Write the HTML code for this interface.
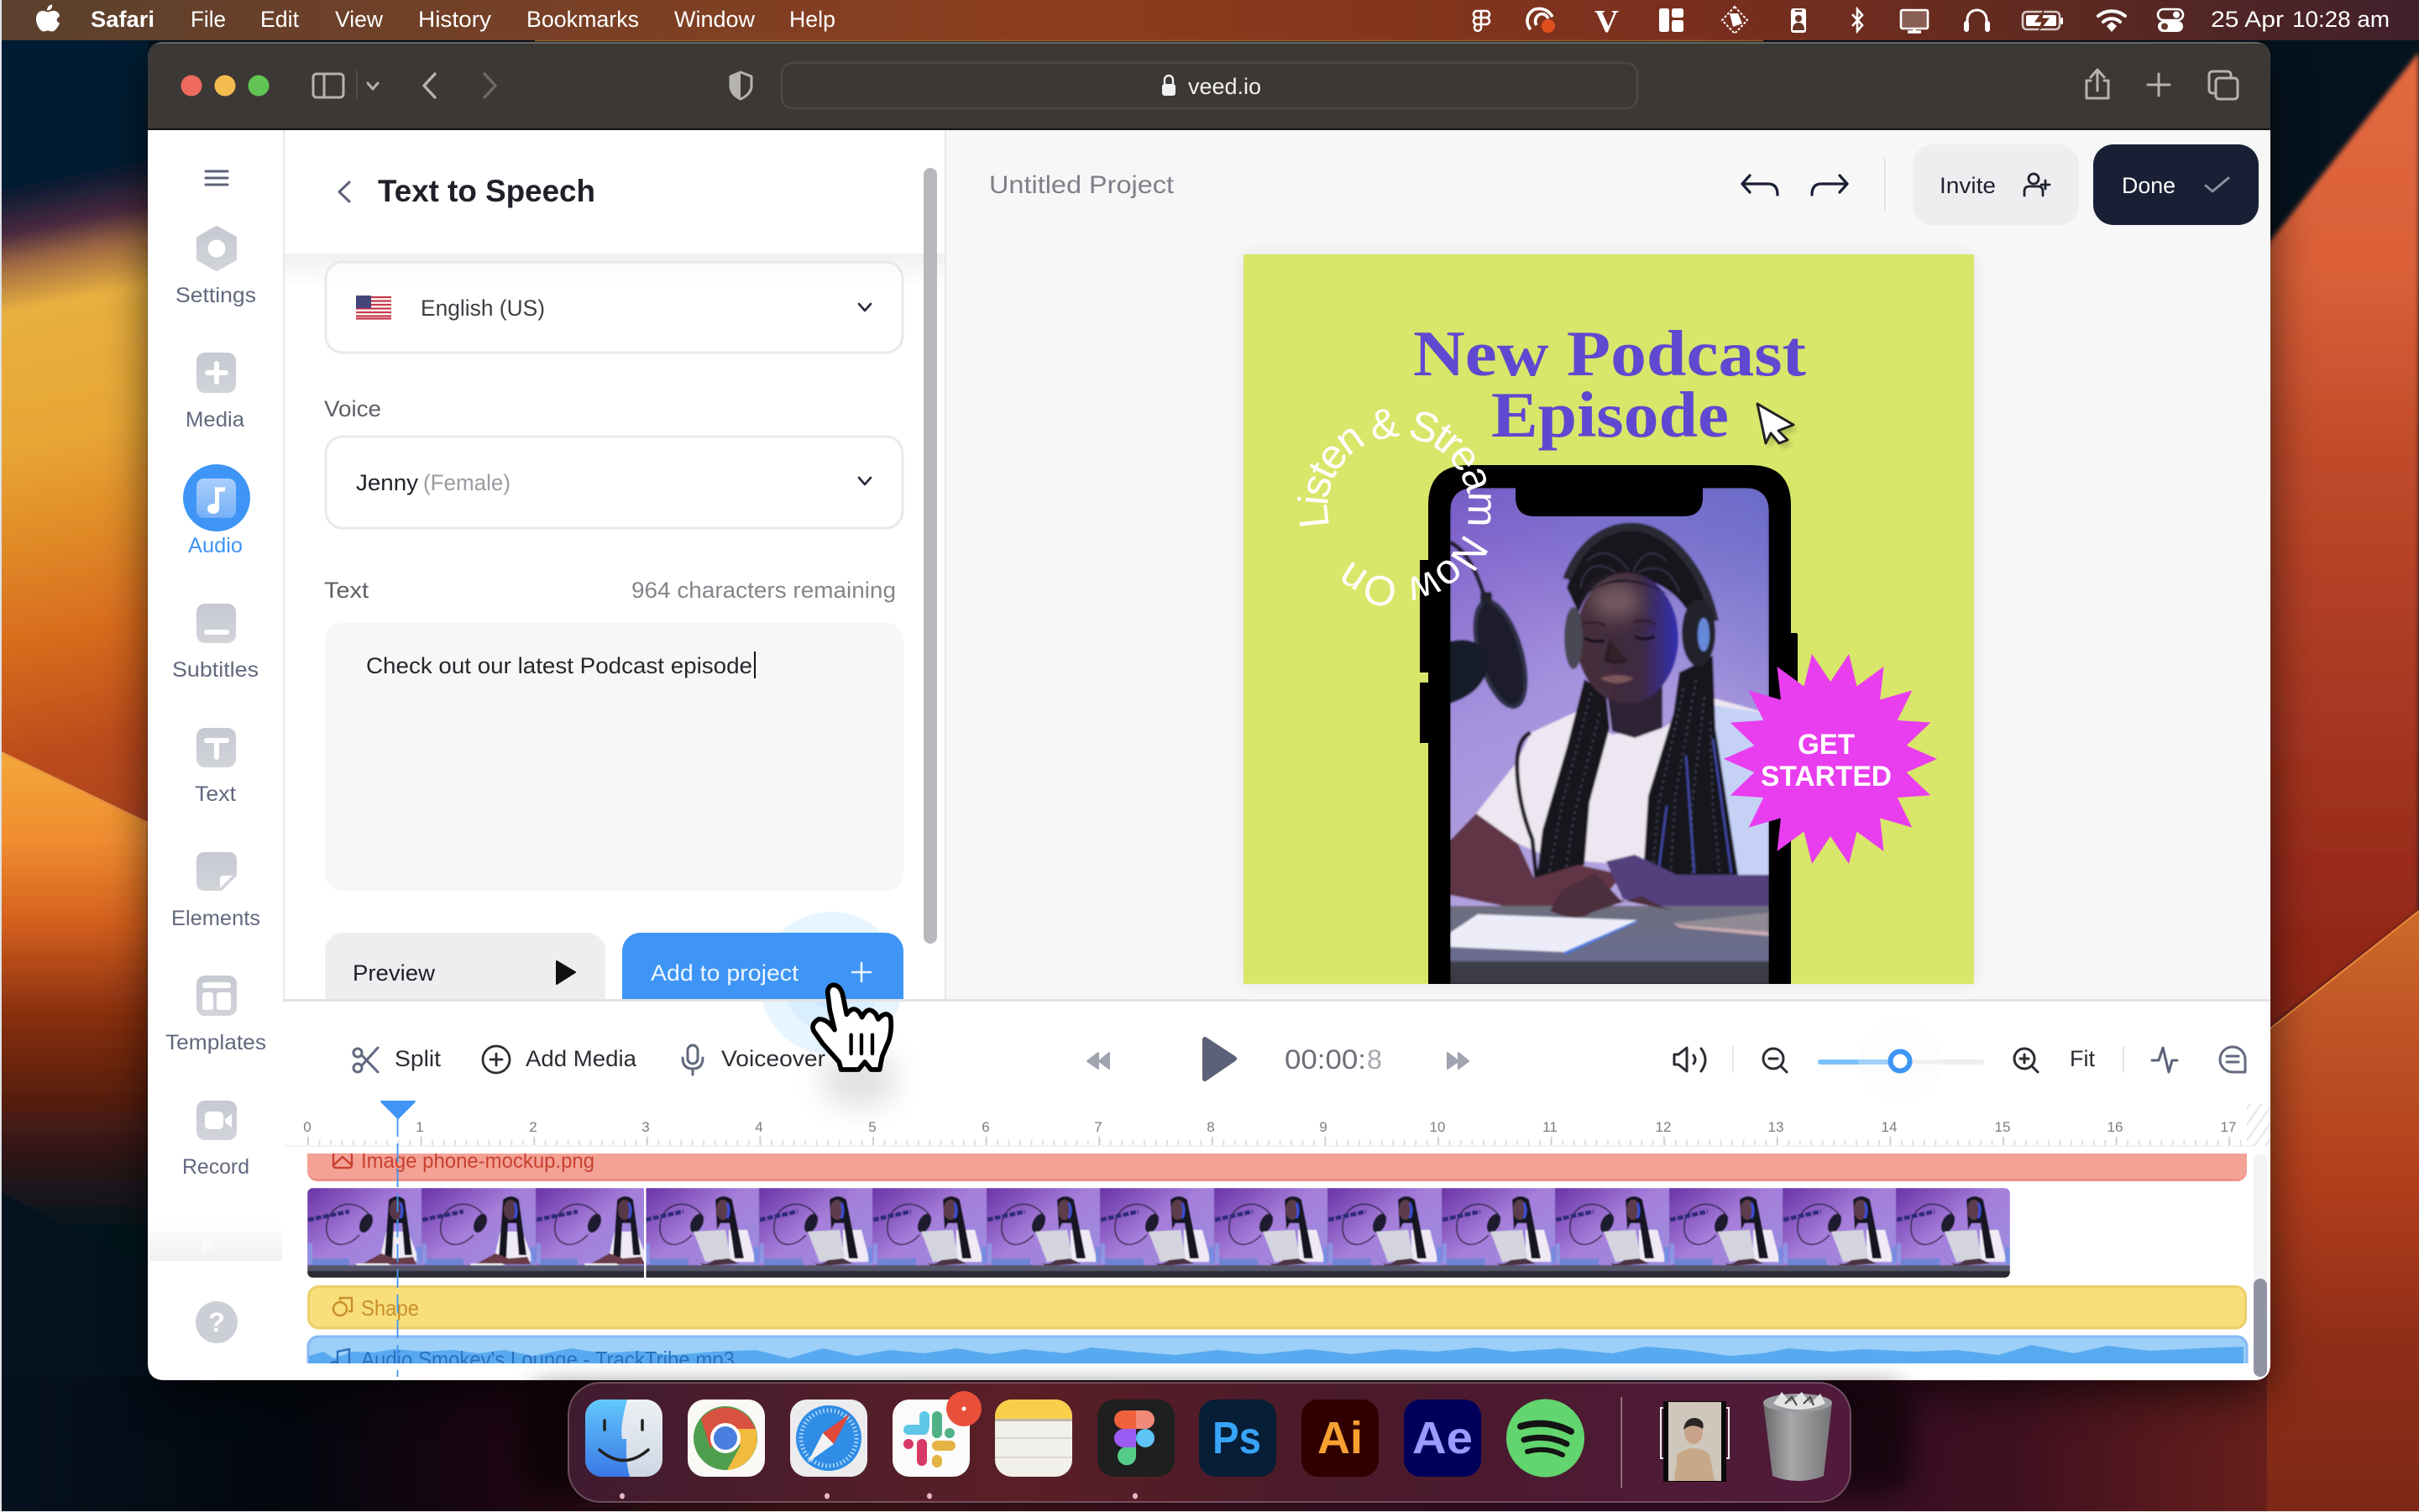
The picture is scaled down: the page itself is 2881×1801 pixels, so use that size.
<!DOCTYPE html>
<html><head><meta charset="utf-8"><title>VEED Text to Speech</title>
<style>
html,body{margin:0;padding:0;background:#05121f;width:2881px;height:1801px;overflow:hidden}
svg{display:block}
text{font-family:"Liberation Sans",sans-serif}
.m{fill:#fff;font-size:27px}
.s{fill:#62687e;font-size:25px}
.p{font-size:27px}
.t{fill:#7b7b82;font-size:17px;text-anchor:middle}
.ic{fill:none;stroke-linecap:round;stroke-linejoin:round}
</style></head><body>
<svg xmlns="http://www.w3.org/2000/svg" width="2881" height="1801" viewBox="0 0 2881 1801">
<defs>
<linearGradient id="menu" x1="0" x2="1" y1="0" y2="0"><stop offset="0" stop-color="#5b412e"/><stop offset=".25" stop-color="#7a4025"/><stop offset=".45" stop-color="#8d3c1c"/><stop offset=".7" stop-color="#7a2f1e"/><stop offset=".85" stop-color="#5e2a20"/><stop offset="1" stop-color="#40202b"/></linearGradient>
<linearGradient id="lu" gradientUnits="userSpaceOnUse" x1="88" y1="48" x2="268" y2="948"><stop offset="0" stop-color="#041a30"/><stop offset=".17" stop-color="#041a30"/><stop offset=".23" stop-color="#4a2a40"/><stop offset=".27" stop-color="#a06a44"/><stop offset=".33" stop-color="#e8b040"/><stop offset=".5" stop-color="#e8a636"/><stop offset=".63" stop-color="#e08a28"/><stop offset=".76" stop-color="#d86a1e"/><stop offset=".9" stop-color="#bc4c1e"/><stop offset="1" stop-color="#ae4420"/></linearGradient>
<linearGradient id="ll" gradientUnits="userSpaceOnUse" x1="0" y1="895" x2="0" y2="1460"><stop offset="0" stop-color="#f4a83c"/><stop offset=".19" stop-color="#f08c30"/><stop offset=".36" stop-color="#d4601e"/><stop offset=".55" stop-color="#8a3010"/><stop offset=".73" stop-color="#581f10"/><stop offset=".87" stop-color="#2a1518"/><stop offset="1" stop-color="#06141f"/></linearGradient>
<linearGradient id="ru" gradientUnits="userSpaceOnUse" x1="0" y1="100" x2="0" y2="1225"><stop offset="0" stop-color="#e2683e"/><stop offset=".2" stop-color="#da6038"/><stop offset=".4" stop-color="#c04a2a"/><stop offset=".6" stop-color="#ad3b24"/><stop offset=".85" stop-color="#982a1a"/><stop offset="1" stop-color="#8a2418"/></linearGradient>
<linearGradient id="rl" gradientUnits="userSpaceOnUse" x1="0" y1="1090" x2="0" y2="1801"><stop offset="0" stop-color="#cc6a2a"/><stop offset=".18" stop-color="#c05526"/><stop offset=".45" stop-color="#b23e1c"/><stop offset=".72" stop-color="#8f2e18"/><stop offset="1" stop-color="#7e2818"/></linearGradient>
<linearGradient id="under" x1="0" x2="1" y1="0" y2="0"><stop offset="0" stop-color="#05121f"/><stop offset=".12" stop-color="#03070e"/><stop offset=".2" stop-color="#1a0612"/><stop offset=".33" stop-color="#3a1414"/><stop offset=".7" stop-color="#300c28"/><stop offset=".83" stop-color="#3e1020"/><stop offset="1" stop-color="#7e2818"/></linearGradient>
<linearGradient id="dockbg" x1="0" x2="1" y1="0" y2="0"><stop offset="0" stop-color="#401b30"/><stop offset=".35" stop-color="#5a1f26"/><stop offset=".6" stop-color="#491a2a"/><stop offset="1" stop-color="#511a3c"/></linearGradient>
<linearGradient id="fadeb" x1="0" x2="0" y1="0" y2="1"><stop offset="0" stop-color="#fff"/><stop offset="1" stop-color="#f1f1f2"/></linearGradient>
<linearGradient id="headsh" x1="0" x2="0" y1="0" y2="1"><stop offset="0" stop-color="#f0f0f1"/><stop offset="1" stop-color="#fff"/></linearGradient>
<linearGradient id="ig" x1="0" x2="0" y1="0" y2="1"><stop offset="0" stop-color="#c6c9d1"/><stop offset="1" stop-color="#d2d4da"/></linearGradient>
<linearGradient id="aud" x1="0" x2="0" y1="0" y2="1"><stop offset="0" stop-color="#a9cffb"/><stop offset="1" stop-color="#77b0f8"/></linearGradient>
<linearGradient id="pbg" gradientUnits="userSpaceOnUse" x1="1760" y1="581" x2="1960" y2="1040"><stop offset="0" stop-color="#7a5cc8"/><stop offset=".5" stop-color="#a592de"/><stop offset="1" stop-color="#b3a4de"/></linearGradient>
<linearGradient id="pbg2" gradientUnits="userSpaceOnUse" x1="2107" y1="581" x2="1950" y2="800"><stop offset="0" stop-color="#6a6cc8"/><stop offset="1" stop-color="#6a6cc8" stop-opacity="0"/></linearGradient>
<linearGradient id="face" x1="0" x2="1" y1="0" y2="0"><stop offset="0" stop-color="#46303a"/><stop offset=".62" stop-color="#3f2a40"/><stop offset="1" stop-color="#3330b4"/></linearGradient>
<linearGradient id="tbl" x1="0" x2="0" y1="0" y2="1"><stop offset="0" stop-color="#6e6e7e"/><stop offset=".7" stop-color="#6a6c90"/><stop offset=".72" stop-color="#3e3e48"/><stop offset="1" stop-color="#3a3a44"/></linearGradient>
<linearGradient id="tb" x1="0" x2="1" y1="0" y2="1"><stop offset="0" stop-color="#6a33a6"/><stop offset=".45" stop-color="#a67edb"/><stop offset="1" stop-color="#9a92e2"/></linearGradient>
<linearGradient id="find1" x1="0" x2="0" y1="0" y2="1"><stop offset="0" stop-color="#62c8fa"/><stop offset="1" stop-color="#3a78e8"/></linearGradient>
<linearGradient id="find2" x1="0" x2="0" y1="0" y2="1"><stop offset="0" stop-color="#eef1f5"/><stop offset="1" stop-color="#cdd7e4"/></linearGradient>
<linearGradient id="tr" x1="0" x2="1" y1="0" y2="0"><stop offset="0" stop-color="#6a6a6c"/><stop offset=".4" stop-color="#a8a8aa"/><stop offset="1" stop-color="#757577"/></linearGradient>
<filter id="b3" x="-50%" y="-50%" width="200%" height="200%"><feGaussianBlur stdDeviation="3"/></filter>
<filter id="b1" x="-10%" y="-10%" width="120%" height="120%"><feGaussianBlur stdDeviation="1"/></filter>
<filter id="b05" x="-5%" y="-5%" width="110%" height="110%"><feGaussianBlur stdDeviation=".6"/></filter>
<filter id="b14" x="-20%" y="-50%" width="140%" height="200%"><feGaussianBlur stdDeviation="14"/></filter>
<filter id="b30" x="-10%" y="-10%" width="120%" height="120%"><feGaussianBlur stdDeviation="26"/></filter>
<filter id="b8" x="-50%" y="-50%" width="200%" height="200%"><feGaussianBlur stdDeviation="10"/></filter>
<filter id="b18" x="-80%" y="-80%" width="260%" height="260%"><feGaussianBlur stdDeviation="18"/></filter>
<clipPath id="win"><path d="M196 50H2684Q2704 50 2704 70V1624Q2704 1644 2684 1644H196Q176 1644 176 1624V70Q176 50 196 50Z"/></clipPath>
<clipPath id="screen"><path d="M1727 1172V611Q1727 581 1757 581H2077Q2107 581 2107 611V1172Z"/></clipPath>
<clipPath id="pane"><rect x="337" y="155" width="788" height="1035"/></clipPath>
<clipPath id="belowLine"><rect x="337" y="1193" width="800" height="120"/></clipPath>
<clipPath id="trk"><rect x="340" y="1374" width="2345" height="250"/></clipPath>
<clipPath id="thumbs"><rect x="366" y="1415" width="2028" height="107" rx="7"/></clipPath>
<pattern id="minor" patternUnits="userSpaceOnUse" x="366" y="1358" width="13.46" height="7"><rect width="2" height="7" fill="#dfdfe3"/></pattern>
<pattern id="major" patternUnits="userSpaceOnUse" x="366" y="1354" width="134.6" height="10"><rect width="2" height="10" fill="#cfd0d6"/></pattern>
<pattern id="hatch" patternUnits="userSpaceOnUse" width="11" height="11" patternTransform="rotate(35)"><rect width="2.5" height="11" fill="#e8e8ea"/></pattern>
<symbol id="thA" viewBox="0 0 136 107" width="136" height="107">
 <rect width="136" height="107" fill="url(#tb)"/>
 <path d="M62 56C44 76 20 68 23 44C26 16 62 10 76 36" fill="none" stroke="#262238" stroke-width="1.5"/>
 <path d="M1 38L50 28" stroke="#2d2a78" stroke-width="5" stroke-dasharray="7 2"/>
 <ellipse cx="70" cy="42" rx="7" ry="12" fill="#1e1c2e" transform="rotate(25 70 42)"/>
 <path d="M86 86L94 52H120L134 88Z" fill="#efeaf4"/>
 <path d="M97 14Q107 6 116 14L125 80H116L113 42H103L101 84H92Z" fill="#171622"/>
 <ellipse cx="106" cy="26" rx="8" ry="12" fill="#57384a"/>
 <path d="M111 18Q115 27 111 36" stroke="#3a50d8" stroke-width="3" fill="none"/>
 <path d="M66 90L88 78L104 84L126 82L130 91H72Z" fill="#6a3a48"/>
 <path d="M58 90L96 90L106 95H60Z" fill="#f3f3f8"/>
 <rect y="92" width="136" height="7" fill="#55566a"/><rect y="99" width="136" height="8" fill="#2a2a32"/>
 <path d="M4 84H50V92H4Z" fill="#6484d4" opacity=".8"/><rect x="1" y="66" width="5" height="24" fill="#86a4ea" opacity=".7"/><rect x="130" y="70" width="6" height="20" fill="#6c8ce0" opacity=".8"/>
</symbol>
<symbol id="thB" viewBox="0 0 136 107" width="136" height="107">
 <rect width="136" height="107" fill="url(#tb)"/>
 <path d="M56 56C38 76 16 68 18 44C20 16 56 10 70 36" fill="none" stroke="#262238" stroke-width="1.5"/>
 <path d="M1 38L46 28" stroke="#2d2a78" stroke-width="5" stroke-dasharray="7 2"/>
 <ellipse cx="62" cy="42" rx="7" ry="12" fill="#1e1c2e" transform="rotate(25 62 42)"/>
 <path d="M100 50H122L132 88H100Z" fill="#efeaf4"/>
 <path d="M84 14Q94 6 104 14L118 84H107L101 42H90L86 50Z" fill="#171622"/>
 <ellipse cx="93" cy="26" rx="8" ry="12" fill="#5d3d4c"/>
 <path d="M98 18Q102 27 98 36" stroke="#3a50d8" stroke-width="3" fill="none"/>
 <path d="M58 52L96 50L102 84L72 88Z" fill="#d4d4de"/>
 <path d="M60 84Q70 96 82 86L100 84L112 90L70 93Z" fill="#4c3340"/>
 <rect y="92" width="136" height="7" fill="#55566a"/><rect y="99" width="136" height="8" fill="#2a2a32"/>
 <path d="M6 84H52V92H6Z" fill="#6484d4" opacity=".8"/><rect x="1" y="66" width="5" height="24" fill="#86a4ea" opacity=".7"/><rect x="130" y="70" width="6" height="20" fill="#6c8ce0" opacity=".8"/>
</symbol>
</defs>

<!-- wallpaper -->
<rect width="2881" height="1801" fill="#05131f"/>
<rect x="0" y="1640" width="2881" height="161" fill="url(#under)"/>
<polygon points="0,48 176,48 176,985 0,898" fill="url(#lu)" filter="url(#b05)"/>
<polygon points="0,895 176,980 176,1510 0,1420" fill="url(#ll)" filter="url(#b1)"/>
<polygon points="2700,292 2881,62 2881,1086 2700,1227" fill="url(#ru)" filter="url(#b3)"/>
<polygon points="2700,1228 2881,1085 2881,1801 2700,1801" fill="url(#rl)"/>
<line x1="2700" y1="1228" x2="2881" y2="1085" stroke="#ee8a3c" stroke-width="2"/>
<line x1="0" y1="895" x2="176" y2="980" stroke="#f6b860" stroke-width="1.5" opacity=".6"/>
<!-- window shadow -->
<rect x="176" y="70" width="2528" height="1590" rx="20" fill="#000" opacity=".62" filter="url(#b30)"/>

<!-- menu bar -->
<rect width="2881" height="48" fill="url(#menu)"/>
<line x1="637" y1="48.5" x2="2100" y2="48.5" stroke="#c97a32" stroke-width="1.5" opacity=".75"/>
<path transform="translate(16 -3.5)" d="M55 23C55 17 48 15 44 17C42 18 40 18 38 17C33 15 27 18 27 26C27 33 32 41 36 41C38 41 39 40 41 40C43 40 44 41 46 41C50 41 54 34 55 31C51 29 50 26 55 23ZM46 9C43 9 40 12 40 16C44 16 47 13 46 9Z" fill="#fff"/>
<text class="m" x="108" y="32" textLength="76" lengthAdjust="spacingAndGlyphs" font-weight="700">Safari</text>
<text class="m" x="227" y="32" textLength="42" lengthAdjust="spacingAndGlyphs">File</text>
<text class="m" x="310" y="32" textLength="46" lengthAdjust="spacingAndGlyphs">Edit</text>
<text class="m" x="399" y="32" textLength="57" lengthAdjust="spacingAndGlyphs">View</text>
<text class="m" x="498" y="32" textLength="87" lengthAdjust="spacingAndGlyphs">History</text>
<text class="m" x="627" y="32" textLength="134" lengthAdjust="spacingAndGlyphs">Bookmarks</text>
<text class="m" x="803" y="32" textLength="96" lengthAdjust="spacingAndGlyphs">Window</text>
<text class="m" x="940" y="32" textLength="55" lengthAdjust="spacingAndGlyphs">Help</text>
<text class="m" x="2633" y="32" textLength="87" lengthAdjust="spacingAndGlyphs">25 Apr</text>
<text class="m" x="2730" y="32" textLength="116" lengthAdjust="spacingAndGlyphs">10:28 am</text>
<!-- status icons -->
<g fill="none" stroke="#fff" stroke-width="2.6">
 <path d="M1757 13H1768A4 4 0 0 1 1768 21H1757A4 4 0 0 1 1757 13ZM1757 21H1768A4 4 0 0 1 1768 29H1757A4 4 0 0 1 1757 21ZM1757 29H1762V33A4 4 0 1 1 1757 29ZM1762 13V29" transform="translate(2 0)"/>
 <path d="M1823 35A15 15 0 0 1 1828 11Q1842 8 1849 20M1830 30A9 9 0 0 1 1834 17Q1840 15 1844 22" stroke-width="3.6"/>
 <rect x="2133" y="10" width="18" height="29" rx="3" fill="#fff" stroke="none"/>
 <path d="M2206 17L2218 30L2212 37V11L2218 18L2206 31"/>
 <rect x="2264" y="12" width="32" height="22" rx="2" fill="#8a5f56"/><path d="M2280 34V38M2272 38H2288" stroke-width="3.4"/>
 <path d="M2343 30V24C2343 8 2366 8 2366 24V30" stroke-width="3"/>
 <rect x="2409" y="14" width="44" height="21" rx="5" opacity=".75"/>
</g>
<circle cx="1844" cy="31" r="8" fill="#e0501f"/>
<text x="1899" y="38" fill="#fff" font-size="38" font-weight="700" textLength="29" lengthAdjust="spacingAndGlyphs" style="font-family:'Liberation Serif',serif">V</text>
<rect x="1976" y="10" width="12" height="28" rx="2.5" fill="#fff"/><rect x="1991" y="10" width="14" height="11" rx="2.5" fill="#fff"/><rect x="1991" y="24" width="14" height="14" rx="2.5" fill="#fff"/>
<path d="M2066 8L2081 24L2066 40L2051 24Z" fill="none" stroke="#fff" stroke-width="2" stroke-dasharray="3 2"/><path d="M2060 16H2070L2075 28L2064 32Z" fill="#fff"/>
<circle cx="2142" cy="22" r="4" fill="#6a3526"/><path d="M2135 36Q2135 27 2142 27Q2149 27 2149 36Z" fill="#6a3526"/><rect x="2138" y="12" width="8" height="2" fill="#6a3526"/>
<rect x="2339" y="25" width="6" height="13" rx="3" fill="#fff"/><rect x="2364" y="25" width="6" height="13" rx="3" fill="#fff"/>
<rect x="2413" y="18" width="36" height="13" rx="2" fill="#fff"/><path d="M2434 12L2424 26H2432L2428 37L2440 22H2432Z" fill="#6a3020" stroke="#6a3020" stroke-width="1"/><rect x="2454" y="21" width="3" height="8" rx="1" fill="#fff"/>
<g fill="none" stroke="#fff" stroke-linecap="round" stroke-width="4"><path d="M2499 19A25 25 0 0 1 2531 19"/><path d="M2505 26A15 15 0 0 1 2525 26"/></g><path d="M2509 31L2515 26L2521 31L2515 38Z" fill="#fff"/>
<rect x="2570" y="11" width="30" height="13" rx="6.5" fill="none" stroke="#fff" stroke-width="2.6"/><circle cx="2592" cy="17.5" r="4" fill="#fff"/><rect x="2570" y="25" width="30" height="13" rx="6.5" fill="#fff"/><circle cx="2578" cy="31.5" r="4" fill="#6a3a30"/>

<!-- window -->
<g clip-path="url(#win)">
<rect x="176" y="50" width="2528" height="1594" fill="#fff"/>
<rect x="176" y="50" width="2528" height="105" fill="#3c3835"/>
<rect x="176" y="50" width="2528" height="2" fill="#6a6763"/>
<rect x="176" y="153" width="2528" height="2" fill="#141414"/>
<circle cx="228" cy="102" r="12.5" fill="#ee6a5e"/><circle cx="268" cy="102" r="12.5" fill="#f5bd4f"/><circle cx="308" cy="102" r="12.5" fill="#61c454"/>
<g class="ic" stroke="#b5b3b0" stroke-width="3">
 <rect x="373" y="88" width="36" height="28" rx="4"/><path d="M386 88V116"/>
 <path d="M438 99L444 106L450 99" stroke-width="3"/>
 <path d="M518 88L505 102L518 116" stroke-width="3.4"/>
 <path d="M577 88L590 102L577 116" stroke="#6b6865" stroke-width="3.4"/>
 <path d="M882 86L895 91V102Q895 112 882 118Q870 112 870 102V91Z" stroke-width="3"/>
 <path d="M1935 93A12 12 0 1 1 1925 90M1925 86V94L1930 90" stroke="#c8c6c3" stroke-width="2.4"/>
 <path d="M2498 86V108M2490 92L2498 83L2506 92M2490 96H2485V117H2511V96H2506"/>
 <path d="M2571 88V114M2558 101H2584"/>
 <rect x="2631" y="85" width="26" height="26" rx="4"/><rect x="2639" y="93" width="26" height="25" rx="4" fill="#3c3835"/>
</g>
<line x1="425" y1="84" x2="425" y2="118" stroke="#555" stroke-width="1.5"/>
<path d="M882 86L870 91V102Q870 112 882 118Z" fill="#b5b3b0"/>
<rect x="931" y="75" width="1019" height="54" rx="13" fill="#3c3835" stroke="#4c4845" stroke-width="2.4"/>
<rect x="1384" y="100" width="16" height="14" rx="3" fill="#f1f1f1"/><path d="M1387 100V95A5 5 0 0 1 1397 95V100" fill="none" stroke="#f1f1f1" stroke-width="2.4"/>
<text x="1415" y="112" fill="#f2f2f2" font-size="27" textLength="87" lengthAdjust="spacingAndGlyphs">veed.io</text>

<!-- left rail -->
<rect x="337" y="155" width="2" height="1040" fill="#e8e8ec"/>
<rect x="339" y="1190" width="2" height="454" fill="#e8e8ec"/>
<path d="M245 204H271M245 212H271M245 220H271" stroke="#5b6178" stroke-width="3" stroke-linecap="round"/>
<polygon points="258,272 279,284 279,308 258,320 237,308 237,284" fill="url(#ig)" stroke="url(#ig)" stroke-width="6" stroke-linejoin="round"/><circle cx="258" cy="296" r="10.5" fill="#fff"/>
<text class="s" x="209" y="360" textLength="96" lengthAdjust="spacingAndGlyphs">Settings</text>
<rect x="234" y="420" width="47" height="48" rx="10" fill="url(#ig)"/><path d="M258 433V455M247 444H269" stroke="#fff" stroke-width="6" stroke-linecap="round"/>
<text class="s" x="221" y="508" textLength="70" lengthAdjust="spacingAndGlyphs">Media</text>
<circle cx="258" cy="593" r="40" fill="#3e95f5"/><rect x="234" y="570" width="47" height="47" rx="9" fill="url(#aud)"/>
<path d="M256 605V580Q262 581 268 580V585Q263 586 261 586V605" fill="#fff"/><ellipse cx="254" cy="606" rx="7" ry="6" fill="#fff"/>
<text class="s" x="224" y="658" textLength="65" lengthAdjust="spacingAndGlyphs" style="fill:#3e95f5">Audio</text>
<rect x="234" y="719" width="47" height="47" rx="10" fill="url(#ig)"/><rect x="243" y="750" width="30" height="6" rx="3" fill="#fff"/>
<text class="s" x="205" y="806" textLength="103" lengthAdjust="spacingAndGlyphs">Subtitles</text>
<rect x="234" y="867" width="47" height="47" rx="10" fill="url(#ig)"/><path d="M246 882H270M258 882V902" stroke="#fff" stroke-width="6" stroke-linecap="round"/>
<text class="s" x="232" y="954" textLength="49" lengthAdjust="spacingAndGlyphs">Text</text>
<path d="M244 1015H272Q282 1015 282 1025V1043L264 1061H244Q234 1061 234 1051V1025Q234 1015 244 1015Z" fill="url(#ig)"/><path d="M262 1058V1047Q262 1043 266 1043H277Z" fill="#fff"/>
<text class="s" x="204" y="1102" textLength="106" lengthAdjust="spacingAndGlyphs">Elements</text>
<rect x="234" y="1162" width="48" height="48" rx="10" fill="url(#ig)"/><rect x="241" y="1170" width="34" height="7" rx="3" fill="#fff"/><rect x="241" y="1182" width="13" height="21" rx="3" fill="#fff"/><rect x="258" y="1182" width="17" height="21" rx="3" fill="#fff"/>
<text class="s" x="197" y="1250" textLength="120" lengthAdjust="spacingAndGlyphs">Templates</text>
<rect x="234" y="1311" width="48" height="47" rx="10" fill="url(#ig)"/><rect x="244" y="1324" width="22" height="21" rx="5" fill="#fff"/><path d="M268 1333L276 1327V1343L268 1337Z" fill="#fff"/>
<text class="s" x="217" y="1398" textLength="80" lengthAdjust="spacingAndGlyphs">Record</text>
<rect x="178" y="1455" width="158" height="47" fill="url(#fadeb)"/>
<path d="M241 1473L258 1483L241 1493Z" fill="#fbfbfb"/>
<circle cx="258" cy="1575" r="25" fill="#cdcfd6"/><text x="258" y="1586" fill="#fff" font-size="32" font-weight="700" text-anchor="middle">?</text>

<!-- panel -->
<g clip-path="url(#pane)">
 <rect x="339" y="155" width="786" height="1035" fill="#fff"/>
 <rect x="339" y="302" width="786" height="40" fill="url(#headsh)"/>
 <path d="M416 217L404 228.5L416 240" fill="none" stroke="#5b6178" stroke-width="3" stroke-linecap="round" stroke-linejoin="round"/>
 <text x="450" y="240" fill="#202128" font-size="37" font-weight="700" textLength="259" lengthAdjust="spacingAndGlyphs">Text to Speech</text>
 <rect x="388" y="312" width="687" height="108" rx="20" fill="#fff" fill-opacity=".6" stroke="#e9e9ed" stroke-width="3"/>
 <rect x="424" y="352" width="42" height="28" fill="#fff"/>
 <path d="M424 354H466M424 358.5H466M424 363H466M424 367.5H466M424 372H466M424 376.5H466M424 379.5H466" stroke="#c8384a" stroke-width="2.2"/>
 <rect x="424" y="352" width="18" height="15" fill="#45457c"/>
 <text class="p" x="501" y="376" fill="#3e3e44" textLength="148" lengthAdjust="spacingAndGlyphs">English (US)</text>
 <path d="M1023 362L1030 370L1037 362" fill="none" stroke="#27273a" stroke-width="2.6" stroke-linecap="round" stroke-linejoin="round"/>
 <text class="p" x="386" y="496" fill="#5e5e66" textLength="68" lengthAdjust="spacingAndGlyphs">Voice</text>
 <rect x="388" y="520" width="687" height="109" rx="20" fill="#fff" stroke="#e9e9ed" stroke-width="3"/>
 <text class="p" x="424" y="584" fill="#202128" textLength="74" lengthAdjust="spacingAndGlyphs">Jenny</text>
 <text class="p" x="504" y="584" fill="#9b9ba2" textLength="104" lengthAdjust="spacingAndGlyphs">(Female)</text>
 <path d="M1023 569L1030 577L1037 569" fill="none" stroke="#27273a" stroke-width="2.6" stroke-linecap="round" stroke-linejoin="round"/>
 <text class="p" x="386" y="712" fill="#5e5e66" textLength="53" lengthAdjust="spacingAndGlyphs">Text</text>
 <text class="p" x="752" y="712" fill="#85858c" textLength="315" lengthAdjust="spacingAndGlyphs">964 characters remaining</text>
 <rect x="387" y="742" width="689" height="319" rx="20" fill="#f7f7f7"/>
 <text class="p" x="436" y="802" fill="#26262c" textLength="460" lengthAdjust="spacingAndGlyphs">Check out our latest Podcast episode</text>
 <rect x="898" y="776" width="2" height="32" fill="#111"/>
 <circle cx="990" cy="1171" r="85" fill="#e6f5ff"/>
 <rect x="1100" y="200" width="16" height="924" rx="8" fill="#b9b9bd"/>
 <rect x="387" y="1111" width="334" height="110" rx="22" fill="#eeeef0"/>
 <text class="p" x="420" y="1168" fill="#202128" textLength="98" lengthAdjust="spacingAndGlyphs">Preview</text>
 <path d="M663 1145L685 1158L663 1172Z" fill="#111" stroke="#111" stroke-width="2" stroke-linejoin="round"/>
 <rect x="741" y="1111" width="335" height="110" rx="22" fill="#3e95f5"/>
 <text class="p" x="775" y="1168" fill="#eef6ff" textLength="176" lengthAdjust="spacingAndGlyphs">Add to project</text>
 <path d="M1026 1147V1169M1015 1158H1037" stroke="#eaf4ff" stroke-width="2.6" stroke-linecap="round"/>
</g>

<!-- stage -->
<rect x="1125" y="155" width="1579" height="1035" fill="#f7f7f7"/>
<rect x="1125" y="155" width="2" height="1035" fill="#e8e8ec"/>
<text x="1178" y="230" fill="#7e7f88" font-size="30" textLength="220" lengthAdjust="spacingAndGlyphs">Untitled Project</text>
<g class="ic" stroke="#192035" stroke-width="3.2">
 <path d="M2084 209L2075 219L2084 229M2076 219H2106Q2117 219 2117 232"/>
 <path d="M2191 209L2200 219L2191 229M2199 219H2169Q2158 219 2158 232"/>
</g>
<rect x="2244" y="188" width="1.5" height="64" fill="#e0e0e3"/>
<rect x="2278" y="172" width="198" height="96" rx="24" fill="#eeeef0"/>
<text x="2310" y="230" fill="#1f2230" font-size="27" textLength="67" lengthAdjust="spacingAndGlyphs">Invite</text>
<g class="ic" stroke="#1f2230" stroke-width="2.8"><circle cx="2422" cy="213" r="6"/><path d="M2411 233V228Q2411 222 2417 222H2427Q2433 222 2433 228V233M2436 215V225M2431 220H2441"/></g>
<rect x="2493" y="172" width="197" height="96" rx="24" fill="#192035"/>
<text x="2527" y="230" fill="#fff" font-size="27" textLength="64" lengthAdjust="spacingAndGlyphs">Done</text>
<path d="M2627 221L2635 228L2654 212" class="ic" stroke="#8d93a3" stroke-width="2.8"/>

<!-- canvas -->
<rect x="1481" y="303" width="870" height="869" fill="#000" opacity=".08" filter="url(#b8)"/>
<rect x="1481" y="303" width="870" height="869" fill="#d8e66a"/>
<text x="1683" y="447" fill="#5f49d0" font-size="77" font-weight="700" textLength="468" lengthAdjust="spacingAndGlyphs" style="font-family:'Liberation Serif',serif">New Podcast</text>
<text x="1776" y="520" fill="#5f49d0" font-size="77" font-weight="700" textLength="283" lengthAdjust="spacingAndGlyphs" style="font-family:'Liberation Serif',serif">Episode</text>
<path d="M2093 481L2136 506L2118 513L2129 524L2119 528L2109 516L2103 528Z" fill="#000" opacity=".18" transform="translate(5 6)" filter="url(#b3)"/>
<path d="M2093 481L2136 506L2118 513L2129 524L2119 528L2109 516L2103 528Z" fill="#fff" stroke="#222" stroke-width="3" stroke-linejoin="round"/>
<!-- phone -->
<rect x="1691" y="667" width="12" height="64" fill="#000"/><rect x="1691" y="731" width="12" height="70" fill="#000"/><rect x="1691" y="813" width="12" height="72" fill="#000"/>
<rect x="2131" y="754" width="10" height="110" rx="2" fill="#000"/>
<path d="M1701 1172V602Q1701 554 1749 554H2085Q2133 554 2133 602V1172Z" fill="#000"/>
<g clip-path="url(#screen)">
 <g filter="url(#b1)">
 <rect x="1727" y="581" width="380" height="591" fill="url(#pbg)"/>
 <rect x="1727" y="581" width="380" height="591" fill="url(#pbg2)"/>
 <path d="M1727 646Q1752 658 1768 711" stroke="#1a1a26" stroke-width="5" fill="none"/>
 <ellipse cx="1787" cy="779" rx="25" ry="65" fill="#1f1e2a" stroke="#2f3048" stroke-width="5" transform="rotate(-16 1787 779)"/>
 <rect x="1763" y="705" width="14" height="14" rx="3" fill="#23232e"/>
 <path d="M1727 764Q1765 755 1773 790Q1768 825 1727 838Z" fill="#191a2c"/>
 <path d="M1758 969L1807 907L1823 873L1877 848L1920 875L1980 867L2042 832L2107 850V1042L1887 1026L1847 1022L1808 1005Z" fill="#ede7f1"/>
 <path d="M2040 840L2107 850V1042H2060Z" fill="#c5d2f6"/>
 <path d="M1913 818L1980 801V867L1947 879L1920 871Z" fill="#2f2036"/>
 <path d="M1823 873Q1805 880 1807 920T1825 1000L1830 1048" fill="none" stroke="#15151e" stroke-width="5"/>
 <path d="M1887 809L1913 826L1917 867L1893 956L1887 1030L1830 1048L1837 989L1867 887Z" fill="#14141c"/>
 <path d="M2000 801L2040 781L2043 867L2070 1042L1957 1042L1963 948L1993 850Z" fill="#14141e"/>
 <g fill="none" stroke="#43435a" stroke-width="2" stroke-dasharray="3 5">
  <path d="M1895 825L1860 960L1845 1040M1905 850L1875 970L1865 1035"/>
  <path d="M2005 820L1975 960L1968 1040M2020 810L1995 950L1990 1040M2030 830L2015 960L2015 1040M2037 860L2040 960L2048 1040"/>
 </g>
 <path d="M1985 960L1975 1040M2008 900L2018 1040M2040 880L2062 1040" stroke="#4a52b8" stroke-width="2" fill="none"/>
 <path d="M1727 1001L1758 969L1808 1005L1827 1046L1880 1030L1933 1042L1893 1087L1847 1087L1790 1079L1727 1066Z" fill="#613644"/>
 <path d="M1913 1026L1947 1018L1997 1042H2107V1083L2007 1087L1933 1071Z" fill="#54407e"/>
 <path d="M1866 700C1885 640 1920 625 1950 628C1990 632 2030 680 2040 735L2008 725Q1985 690 1930 684Q1895 690 1880 730Z" fill="#15131c"/>
 <ellipse cx="1938" cy="760" rx="61" ry="78" fill="url(#face)"/>
 <ellipse cx="1925" cy="716" rx="30" ry="22" fill="#84676a" opacity=".75" filter="url(#b8)"/>
 <path d="M1880 716Q1925 672 1995 712Q1960 690 1930 690Q1900 694 1880 716Z" fill="#15131c"/>
 <g fill="none" stroke="#35354a" stroke-width="1.8"><path d="M1925 682Q1890 660 1882 700M1940 680Q1915 645 1890 668M1950 682Q1985 665 2000 705M1945 682Q1960 645 1985 668"/></g>
 <path d="M1866 690C1885 640 1920 625 1950 628C1990 632 2030 680 2042 740" fill="none" stroke="#2a2a36" stroke-width="10"/>
 <ellipse cx="1874" cy="760" rx="11" ry="37" fill="#4a4a54"/>
 <ellipse cx="2023" cy="754" rx="20" ry="40" fill="#20202c"/><ellipse cx="2029" cy="756" rx="7" ry="20" fill="#6688d8"/>
 <path d="M1887 760Q1898 766 1911 763M1947 758Q1958 764 1971 758" stroke="#14101a" stroke-width="3.5" fill="none"/>
 <path d="M1884 744Q1898 738 1912 745M1945 742Q1958 736 1972 744" stroke="#2e1c26" stroke-width="2.5" fill="none"/>
 <path d="M1918 762L1912 786Q1925 792 1938 786" stroke="#281a24" stroke-width="3" fill="#31222c"/>
 <path d="M1906 808Q1925 800 1946 808Q1926 820 1906 808Z" fill="#7c5458"/>
 <rect x="1727" y="1079" width="380" height="93" fill="url(#tbl)"/>
 <path d="M1727 1111L1760 1089L1950 1096L1863 1134L1727 1128Z" fill="#ecedf8"/><path d="M1863 1134L1950 1096L1948 1099L1864 1137Z" fill="#3f7be8"/>
 <path d="M1993 1099L2107 1087V1110L2000 1103Z" fill="#8f8a94"/><path d="M1993 1099L2000 1105L2107 1115V1110L2000 1102Z" fill="#c8aab0"/>
 <path d="M1846 1085Q1880 1100 1895 1087L1955 1067Q1985 1085 2005 1087L1930 1072L1900 1040L1860 1060Z" fill="#4e2f3c"/>
 </g>
</g>
<path d="M1805 578H2028V592Q2028 615 2005 615H1828Q1805 615 1805 592Z" fill="#000"/>
<!-- curved text -->
<path id="curve" d="M1584 627A84 84 0 1 1 1611 669" fill="none"/>
<text fill="#fff" font-size="50" textLength="480" lengthAdjust="spacing"><textPath href="#curve">Listen &amp; Stream Now On</textPath></text>
<!-- badge -->
<polygon fill="#e93df0" points="2307,904 2270.6,888 2299.3,860.6 2259.7,858 2277.3,822.4 2239.1,833.5 2243.5,794 2211.5,817.5 2202,779 2180,812 2158,779 2148.5,817.5 2116.5,794 2120.9,833.5 2082.7,822.4 2100.3,858 2060.7,860.6 2089.4,888 2053,904 2089.4,920 2060.7,947.4 2100.3,950 2082.7,985.6 2120.9,974.5 2116.5,1014 2148.5,990.5 2158,1029 2180,996 2202,1029 2211.5,990.5 2243.5,1014 2239.1,974.5 2277.3,985.6 2259.7,950 2299.3,947.4 2270.6,920"/>
<text x="2141" y="898" fill="#fff" font-size="34" font-weight="700" textLength="68" lengthAdjust="spacingAndGlyphs">GET</text>
<text x="2097" y="936" fill="#fff" font-size="34" font-weight="700" textLength="156" lengthAdjust="spacingAndGlyphs">STARTED</text>

<!-- timeline -->
<rect x="339" y="1192" width="2365" height="452" fill="#fff"/>
<rect x="337" y="1190" width="2367" height="3" fill="#e3e3e6"/>
<g clip-path="url(#belowLine)">
 <circle cx="990" cy="1171" r="85" fill="#e6f5ff"/>
 <circle cx="990" cy="1171" r="57" fill="#d9efff"/>
 <circle cx="990" cy="1171" r="30" fill="#cce7fd"/>
</g>
<!-- toolbar -->
<g class="ic" stroke="#62687e" stroke-width="3">
 <circle cx="426" cy="1272" r="5"/><circle cx="426" cy="1254" r="5"/>
 <path d="M431 1269L450 1248M431 1257L450 1277"/>
</g>
<text x="470" y="1270" fill="#2c2c34" font-size="27" textLength="55" lengthAdjust="spacingAndGlyphs">Split</text>
<g class="ic" stroke="#2c2c34" stroke-width="2.8"><circle cx="591" cy="1262" r="16"/><path d="M591 1255V1269M584 1262H598"/></g>
<text x="626" y="1270" fill="#2c2c34" font-size="27" textLength="132" lengthAdjust="spacingAndGlyphs">Add Media</text>
<g class="ic" stroke="#62687e" stroke-width="3"><rect x="819" y="1245" width="12" height="22" rx="6"/><path d="M813 1260Q813 1273 825 1273Q837 1273 837 1260M825 1273V1280"/></g>
<text x="859" y="1270" fill="#2c2c34" font-size="27" textLength="124" lengthAdjust="spacingAndGlyphs">Voiceover</text>
<path d="M1321 1254V1273L1309 1264ZM1308 1254V1273L1295 1264Z" fill="#a0a3b0" stroke="#a0a3b0" stroke-width="2" stroke-linejoin="round"/>
<path d="M1435 1238L1470 1261L1435 1285Z" fill="#5b6178" stroke="#5b6178" stroke-width="6" stroke-linejoin="round"/>
<text x="1530" y="1273" fill="#6c6d76" font-size="32" textLength="97" lengthAdjust="spacingAndGlyphs">00:00:</text><text x="1628" y="1273" fill="#a8a9b0" font-size="32" textLength="18" lengthAdjust="spacingAndGlyphs">8</text>
<path d="M1724 1254V1273L1737 1264ZM1737 1254V1273L1749 1264Z" fill="#a0a3b0" stroke="#a0a3b0" stroke-width="2" stroke-linejoin="round"/>
<g class="ic" stroke="#2c2c34" stroke-width="3">
 <path d="M2009 1248V1276L1999 1268H1994V1256H1999Z"/><path d="M2017 1257Q2021 1262 2017 1267M2026 1249Q2036 1262 2026 1276"/>
 <circle cx="2112" cy="1261" r="12"/><path d="M2107 1261H2117M2121 1270L2128 1277" />
 <circle cx="2411" cy="1261" r="12"/><path d="M2406 1261H2416M2411 1256V1266M2420 1270L2427 1277"/>
</g>
<rect x="2063" y="1246" width="1.5" height="32" fill="#e0e0e3"/><rect x="2528" y="1246" width="1.5" height="32" fill="#e0e0e3"/>
<rect x="2165" y="1262" width="198" height="6" rx="3" fill="#eeeef0"/><rect x="2165" y="1262" width="98" height="6" rx="3" fill="#7cc0fb"/>
<circle cx="2263" cy="1264" r="50" fill="#f9f9fa" opacity=".3"/>
<circle cx="2263" cy="1264" r="11.5" fill="#fff" stroke="#3e95f5" stroke-width="6"/>
<text x="2465" y="1270" fill="#2c2c34" font-size="27" textLength="30" lengthAdjust="spacingAndGlyphs">Fit</text>
<path d="M2563 1263H2571L2576 1248L2583 1277L2587 1263H2593" class="ic" stroke="#5b6178" stroke-width="3"/>
<g class="ic" stroke="#62687e" stroke-width="3"><path d="M2674 1277H2659A15 15 0 1 1 2674 1262Z"/><path d="M2652 1258H2666M2652 1265H2666"/></g>
<!-- ruler -->
<rect x="366" y="1358" width="2310" height="7" fill="url(#minor)"/>
<rect x="366" y="1354" width="2295" height="10" fill="url(#major)"/>
<rect x="339" y="1364" width="2345" height="2" fill="#f3f3f5"/>
<rect x="2676" y="1315" width="28" height="50" fill="url(#hatch)"/>
<g>
<text class="t" x="366" y="1348">0</text><text class="t" x="500" y="1348">1</text><text class="t" x="635" y="1348">2</text><text class="t" x="769" y="1348">3</text><text class="t" x="904" y="1348">4</text><text class="t" x="1039" y="1348">5</text><text class="t" x="1174" y="1348">6</text><text class="t" x="1308" y="1348">7</text><text class="t" x="1442" y="1348">8</text><text class="t" x="1576" y="1348">9</text><text class="t" x="1712" y="1348">10</text><text class="t" x="1846" y="1348">11</text><text class="t" x="1981" y="1348">12</text><text class="t" x="2115" y="1348">13</text><text class="t" x="2250" y="1348">14</text><text class="t" x="2385" y="1348">15</text><text class="t" x="2519" y="1348">16</text><text class="t" x="2654" y="1348">17</text>
</g>
<!-- tracks -->
<g clip-path="url(#trk)">
 <rect x="366" y="1360" width="2310" height="47" rx="12" fill="#ef8f84"/>
 <rect x="366" y="1360" width="2310" height="44" rx="11" fill="#f4a296"/>
 <g fill="none" stroke="#c8402f" stroke-width="2.4"><rect x="397" y="1373" width="22" height="18" rx="3"/><path d="M397 1388L408 1378L419 1388"/></g>
 <text x="430" y="1391" fill="#c8402f" font-size="25" textLength="278" lengthAdjust="spacingAndGlyphs">Image phone-mockup.png</text>
 <g clip-path="url(#thumbs)">
  <g filter="url(#b05)">
  <use href="#thA" x="366" y="1415"/><use href="#thA" x="502" y="1415"/><use href="#thA" x="638" y="1415"/>
  <use href="#thB" x="768" y="1415"/><use href="#thB" x="904" y="1415"/><use href="#thB" x="1039" y="1415"/><use href="#thB" x="1175" y="1415"/><use href="#thB" x="1310" y="1415"/><use href="#thB" x="1446" y="1415"/><use href="#thB" x="1581" y="1415"/><use href="#thB" x="1717" y="1415"/><use href="#thB" x="1852" y="1415"/><use href="#thB" x="1988" y="1415"/><use href="#thB" x="2123" y="1415"/><use href="#thB" x="2258" y="1415"/>
  </g>
  <rect x="767" y="1415" width="2.5" height="107" fill="#fff"/>
 </g>
 <rect x="367.5" y="1532.5" width="2307" height="49.5" rx="12" fill="#f8df7c" stroke="#ebcf6a" stroke-width="3"/>
 <g fill="none" stroke="#c8902a" stroke-width="2.4"><circle cx="405" cy="1559" r="8"/><path d="M405 1549V1546H419V1562H415"/></g>
 <text x="430" y="1567" fill="#c8902a" font-size="26" textLength="69" lengthAdjust="spacingAndGlyphs">Shape</text>
 <rect x="367" y="1592" width="2309" height="50" rx="12" fill="#9cd0f8" stroke="#8ab8f5" stroke-width="3"/>
 <path fill="#58aaf0" d="M368 1630V1615L385 1610L398 1618L420 1610L445 1611L470 1607L505 1610L540 1608L570 1612L600 1608L635 1615L680 1606L720 1612L760 1609L800 1614L850 1610L900 1608L940 1618L980 1606L1020 1615L1060 1608L1100 1612L1140 1606L1180 1613L1220 1607L1270 1612L1300 1605L1350 1610L1400 1614L1450 1608L1500 1613L1560 1607L1610 1613L1660 1607L1710 1610L1760 1605L1800 1610L1860 1606L1920 1612L1960 1604L2010 1608L2060 1615L2100 1612L2130 1606L2180 1610L2220 1607L2280 1610L2330 1608L2380 1614L2420 1602L2470 1612L2510 1603L2560 1609L2620 1606L2672 1604V1630Z"/>
 <g fill="none" stroke="#2a70c0" stroke-width="2.4"><path d="M402 1626V1610L416 1607V1624"/><circle cx="398" cy="1626" r="4"/></g>
 <text x="430" y="1628" fill="#2a70c0" font-size="26" textLength="445" lengthAdjust="spacingAndGlyphs">Audio Smokey's Lounge - TrackTribe.mp3</text>
</g>
<rect x="2684" y="1374" width="16" height="266" rx="8" fill="#f4f4f6"/>
<rect x="2684" y="1523" width="16" height="117" rx="8" fill="#8f93a3"/>
<path d="M454 1312H494L474 1332Z" fill="#3e95f5" stroke="#3e95f5" stroke-width="2" stroke-linejoin="round"/>
<line x1="473.5" y1="1332" x2="473.5" y2="1640" stroke="#3e95f5" stroke-width="1.8" stroke-dasharray="22 8"/>
</g>

<!-- hand cursor -->
<ellipse cx="1023" cy="1285" rx="46" ry="34" fill="#000" opacity=".12" filter="url(#b18)"/>
<g transform="translate(880 1070) scale(.3333)">
 <path d="M317 335Q320 308 342 310Q365 315 372 350L385 415Q410 380 432 410L440 425Q462 380 490 415L498 432Q525 400 542 425Q548 470 535 510L512 565L503 612H472L450 585L428 612H365L358 585L300 520L268 475Q255 450 285 432Q315 430 342 470L325 400Z" fill="#fff" stroke="#000" stroke-width="17" stroke-linejoin="round"/>
 <path d="M401 488V555M438 488V555M477 488V555" stroke="#000" stroke-width="13" stroke-linecap="round"/>
</g>

<!-- dock shadow -->
<rect x="620" y="1650" width="1660" height="130" rx="36" fill="#000" opacity=".55" filter="url(#b14)"/>
<rect x="677" y="1647" width="1527" height="142" rx="38" fill="url(#dockbg)" stroke="#8a6878" stroke-width="2" stroke-opacity=".7"/>
<!-- finder -->
<g>
<clipPath id="c1"><rect x="697" y="1667" width="92" height="92" rx="20"/></clipPath>
<g clip-path="url(#c1)"><rect x="697" y="1667" width="92" height="92" fill="url(#find2)"/><path d="M697 1667H747Q738 1700 741 1714H746V1730Q746 1745 750 1759H697Z" fill="url(#find1)"/></g>
<path d="M720 1692V1703M765 1692V1703" stroke="#222" stroke-width="3.5" stroke-linecap="round"/>
<path d="M714 1727Q743 1752 772 1727" fill="none" stroke="#222" stroke-width="3.5" stroke-linecap="round"/>
</g>
<!-- chrome -->
<rect x="819" y="1667" width="92" height="92" rx="20" fill="#fbf9f6"/>
<circle cx="864" cy="1713" r="38" fill="#4f9e4e"/>
<path d="M835 1690A38 38 0 0 1 893 1690L900 1702H864L846 1725Z" fill="#d95140"/>
<path d="M900 1702A38 38 0 0 1 866 1751L882 1722L864 1702Z" fill="#f2bb3e"/>
<circle cx="864" cy="1713" r="18" fill="#fff"/><circle cx="864" cy="1713" r="14" fill="#4a7fdf"/>
<!-- safari -->
<rect x="941" y="1667" width="92" height="92" rx="20" fill="#ececee"/>
<circle cx="987" cy="1713" r="39" fill="#2f8de6"/><circle cx="987" cy="1713" r="33" fill="none" stroke="#bcdcf8" stroke-width="5" stroke-dasharray="1.5 3"/>
<path d="M1012 1684L993 1720L980 1707Z" fill="#e0483a"/><path d="M962 1742L980 1707L993 1720Z" fill="#f2f2f2"/>
<!-- slack -->
<rect x="1063" y="1667" width="92" height="92" rx="20" fill="#fbfbfb"/>
<rect x="1095" y="1681" width="12" height="24" rx="6" fill="#5fc6e8"/><rect x="1076" y="1697" width="30" height="12" rx="6" fill="#5fc6e8"/>
<rect x="1110" y="1681" width="12" height="32" rx="6" fill="#4fb286"/><rect x="1125" y="1701" width="12" height="12" rx="6" fill="#4fb286"/>
<rect x="1076" y="1714" width="12" height="12" rx="6" fill="#d83a68"/><rect x="1092" y="1714" width="12" height="32" rx="6" fill="#d83a68"/>
<rect x="1110" y="1716" width="28" height="12" rx="6" fill="#e5b244"/><rect x="1110" y="1733" width="12" height="15" rx="6" fill="#e5b244"/>
<circle cx="1148" cy="1678" r="21" fill="#e8503a"/><circle cx="1148" cy="1678" r="2.5" fill="#fff"/>
<!-- notes -->
<clipPath id="c5"><rect x="1185" y="1667" width="92" height="92" rx="20"/></clipPath>
<g clip-path="url(#c5)"><rect x="1185" y="1667" width="92" height="92" fill="#f2f0ea"/><rect x="1185" y="1667" width="92" height="23" fill="#f8cf4a"/><rect x="1185" y="1690" width="92" height="3" fill="#bdb8ae"/><rect x="1185" y="1712" width="92" height="2" fill="#d9d6ce"/><rect x="1185" y="1735" width="92" height="2" fill="#d9d6ce"/></g>
<!-- figma -->
<rect x="1307" y="1667" width="92" height="92" rx="20" fill="#1e1f1f"/>
<path d="M1353 1680H1338A11 11 0 0 0 1338 1702H1353Z" fill="#f0623c"/><path d="M1353 1680H1364A11 11 0 0 1 1364 1702H1353Z" fill="#f28a78"/>
<path d="M1353 1702H1338A11 11 0 0 0 1338 1724H1353Z" fill="#9a5cf2"/><circle cx="1364" cy="1713" r="11" fill="#5ec4f8"/>
<path d="M1338 1724H1353V1735A11 11 0 1 1 1338 1724Z" fill="#55cc88"/>
<!-- adobe -->
<rect x="1428" y="1667" width="92" height="92" rx="20" fill="#061e36"/><text x="1444" y="1731" fill="#37a4f8" font-size="54" font-weight="700" textLength="58" lengthAdjust="spacingAndGlyphs">Ps</text>
<rect x="1550" y="1667" width="92" height="92" rx="20" fill="#300000"/><text x="1569" y="1731" fill="#f8a132" font-size="54" font-weight="700" textLength="54" lengthAdjust="spacingAndGlyphs">Ai</text>
<rect x="1672" y="1667" width="92" height="92" rx="20" fill="#00005b"/><text x="1682" y="1731" fill="#9a9aff" font-size="54" font-weight="700" textLength="72" lengthAdjust="spacingAndGlyphs">Ae</text>
<!-- spotify -->
<circle cx="1840.5" cy="1713" r="46.5" fill="#62d56e"/>
<g fill="none" stroke="#141414" stroke-linecap="round"><path d="M1811 1699Q1842 1690 1871 1705" stroke-width="8"/><path d="M1815 1715Q1842 1708 1866 1720" stroke-width="7"/><path d="M1819 1729Q1842 1723 1861 1733" stroke-width="6"/></g>
<!-- photo -->
<rect x="1978" y="1677" width="81" height="60" fill="none" stroke="#eee" stroke-width="2"/>
<rect x="1981" y="1669" width="75" height="96" fill="#0a0a0a"/>
<rect x="1987" y="1670" width="63" height="94" fill="#cfc7bc"/>
<ellipse cx="2017" cy="1706" rx="11" ry="14" fill="#c9a28a"/><path d="M2005 1703Q2007 1688 2020 1689Q2031 1692 2028 1702Q2015 1694 2005 1703Z" fill="#2a2624"/>
<path d="M1994 1764L1998 1732Q2016 1718 2036 1732L2042 1764Z" fill="#c7a988"/>
<!-- trash -->
<path d="M2100 1670H2182L2172 1758Q2141 1770 2111 1758Z" fill="url(#tr)"/>
<ellipse cx="2141" cy="1671" rx="41" ry="11" fill="#9b9c9f"/>
<path d="M2112 1672L2122 1658L2132 1670L2146 1658L2156 1672L2168 1660L2174 1672Q2141 1686 2112 1672Z" fill="#e2e3e5"/>
<path d="M2126 1672L2134 1664L2140 1674M2148 1672L2156 1664L2160 1674" stroke="#444" stroke-width="2" fill="none"/>
<rect x="1930.5" y="1664" width="1.5" height="108" fill="#a28a94"/>
<g fill="#e4b8c4"><ellipse cx="741" cy="1782" rx="3" ry="3.5"/><ellipse cx="985" cy="1782" rx="3" ry="3.5"/><ellipse cx="1107" cy="1782" rx="3" ry="3.5"/><ellipse cx="1352" cy="1782" rx="3" ry="3.5"/></g>
<!-- screen edge -->
<rect x="0" y="0" width="2" height="1801" fill="#dfe3e6"/>
<rect x="0" y="1800" width="2881" height="1" fill="#e6e6e6"/>
</svg>
</body></html>
